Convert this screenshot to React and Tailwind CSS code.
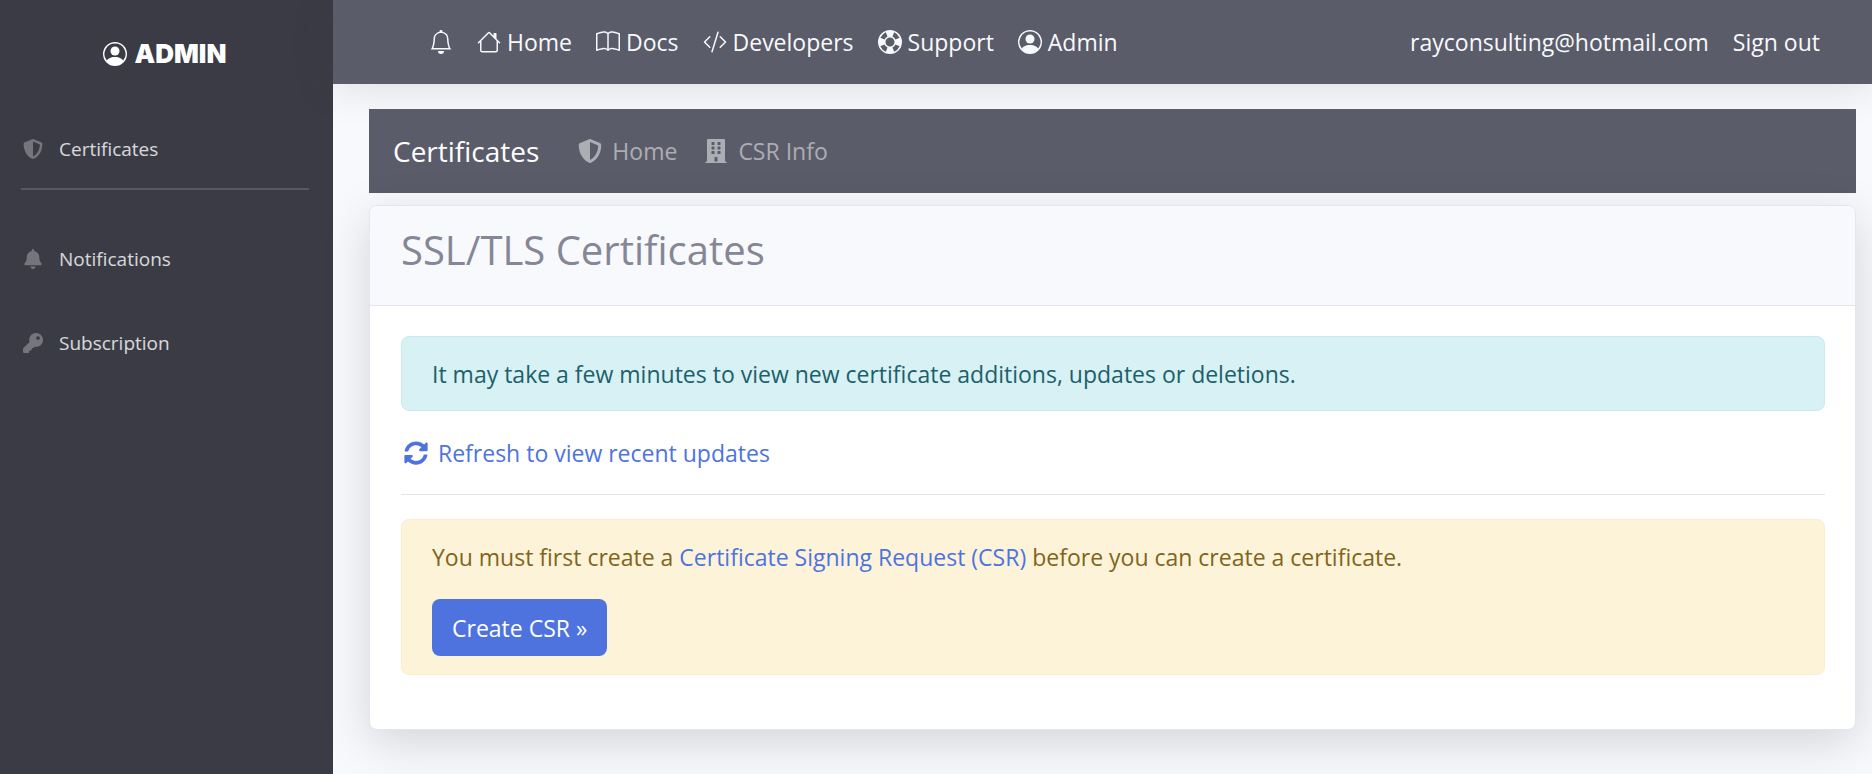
import { BsPersonCircle, BsBell, BsHouse, BsBook, BsCodeSlash, BsLifePreserver } from "react-icons/bs";
import { FaShieldAlt, FaBell, FaKey, FaBuilding, FaSyncAlt } from "react-icons/fa";

const topLinks = [
  { label: "Home", Icon: BsHouse },
  { label: "Docs", Icon: BsBook },
  { label: "Developers", Icon: BsCodeSlash },
  { label: "Support", Icon: BsLifePreserver },
  { label: "Admin", Icon: BsPersonCircle },
];

function SideLink({ Icon, children }) {
  return (
    <a href="#" className="flex h-[84px] items-center gap-4 px-[23px] text-[19px] text-white/80">
      <Icon className="size-5 shrink-0 text-white/30" />
      {children}
    </a>
  );
}

function Sidebar() {
  return (
    <aside className="w-[333px] shrink-0 bg-[#3a3b45]">
      <a href="#" className="flex h-[107px] items-center justify-center gap-2 pr-1 font-['Inter',sans-serif] text-[26px] font-black text-white">
        <BsPersonCircle className="size-6" />
        ADMIN
      </a>
      <nav>
        <SideLink Icon={FaShieldAlt}>Certificates</SideLink>
        <hr className="-mt-[3px] mr-6 mb-[27px] ml-[21px] border-t-2 border-white/15" />
        <SideLink Icon={FaBell}>Notifications</SideLink>
        <SideLink Icon={FaKey}>Subscription</SideLink>
      </nav>
    </aside>
  );
}

function Topbar() {
  return (
    <header className="flex h-[84px] items-center bg-[#5a5c69] pr-[52px] pl-24 text-[23px] text-[#f8f9fc] shadow-[0_3px_42px_0_rgba(58,59,69,0.15)]">
      <nav className="flex items-center gap-6">
        <a href="#" aria-label="Notifications">
          <BsBell className="size-6" />
        </a>
        {topLinks.map(({ label, Icon }) => (
          <a key={label} href="#" className="flex items-center gap-1.5">
            <Icon className="size-6" />
            {label}
          </a>
        ))}
      </nav>
      <div className="ml-auto flex gap-6">
        <a href="#">rayconsulting@hotmail.com</a>
        <a href="#">Sign out</a>
      </div>
    </header>
  );
}

export default function App() {
  return (
    <div className="flex min-h-screen bg-[#f8f9fc] font-['Open_Sans','Noto_Sans',sans-serif] text-[23px] leading-9">
      <Sidebar />
      <div className="min-w-0 flex-1">
        <Topbar />
        <main className="pt-[25px] pr-4 pb-8 pl-9">
          <nav className="flex h-[84px] items-center bg-[#5a5c69] px-6 text-white/50">
            <a href="#" className="mr-[39px] text-[28px] text-white">Certificates</a>
            <a href="#" className="mr-[27px] flex items-center gap-2.5">
              <FaShieldAlt className="size-6" />
              Home
            </a>
            <a href="#" className="flex items-center gap-2.5">
              <FaBuilding className="size-6" />
              CSR Info
            </a>
          </nav>

          <section className="mt-3 rounded-lg border border-[#e3e6f0] bg-white shadow-[0_12px_48px_0_rgba(0,0,0,0.15)]">
            <div className="rounded-t-lg border-b border-[#e3e6f0] bg-[#f8f9fc] px-[31px] pt-[18px] pb-[30px]">
              <h1 className="text-[40px] leading-[51px] text-[#858796]">SSL/TLS Certificates</h1>
            </div>
            <div className="pt-[30px] pr-[30px] pb-[54px] pl-[31px]">
              <div className="rounded-lg border border-[#c7ebf1] bg-[#d7f1f5] px-[30px] pt-[19px] pb-[18px] text-[#1c606a]">
                It may take a few minutes to view new certificate additions, updates or deletions.
              </div>
              <a href="#" className="mt-6 flex w-fit items-center gap-2.5 pl-[3px] text-[#4e73df]">
                <FaSyncAlt className="size-6" />
                Refresh to view recent updates
              </a>
              <hr className="mt-[23px] mb-6 border-t border-black/10" />
              <div className="rounded-lg border border-[#fceec9] bg-[#fdf3d8] px-[30px] pt-[19px] pb-[18px] text-[#806520]">
                <p>
                  You must first create a{" "}
                  <a href="#" className="text-[#4e73df]">Certificate Signing Request (CSR)</a>{" "}
                  before you can create a certificate.
                </p>
                <button type="button" className="mt-6 block h-[57px] rounded-lg bg-[#4e73df] px-5 text-white">
                  Create CSR »
                </button>
              </div>
            </div>
          </section>
        </main>
      </div>
    </div>
  );
}
